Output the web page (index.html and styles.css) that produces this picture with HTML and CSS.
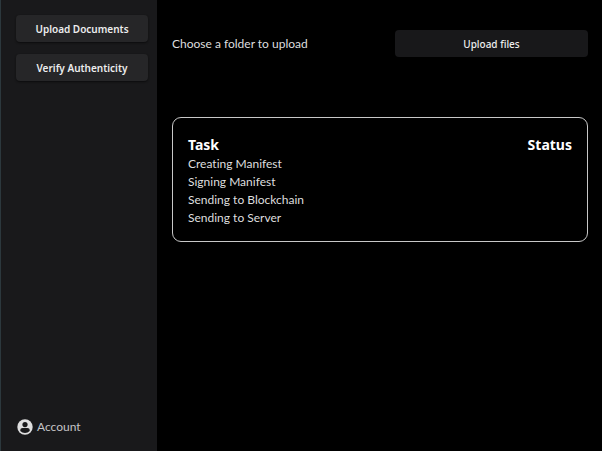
FILE: index.html
```html
<!DOCTYPE html>
<html lang="en">
<head>
<meta charset="utf-8">
<meta name="viewport" content="width=device-width, initial-scale=1">
<title>Upload Documents</title>
<link rel="stylesheet" href="styles.css">
</head>
<body>
<div class="app">
  <aside class="sidebar">
    <nav class="nav">
      <button class="button nav-button" type="button">Upload Documents</button>
      <button class="button nav-button" type="button">Verify Authenticity</button>
    </nav>
    <a class="account" href="#account">
      <svg class="account-icon" viewBox="0 0 16 16" aria-hidden="true">
        <circle cx="8" cy="8" r="7.7" fill="#dededf"/>
        <circle cx="8" cy="5.6" r="2.6" fill="#19191b"/>
        <path d="M3.300 11.900V11c0-1.300 1-2.100 2.300-2.100h4.800c1.300 0 2.300.8 2.300 2.100v.9C11.500 13.200 9.800 13.900 8 13.900S4.500 13.200 3.300 11.900z" fill="#19191b"/>
      </svg>
      <span>Account</span>
    </a>
  </aside>
  <main class="main">
    <div class="upload-row">
      <label for="upload">Choose a folder to upload</label>
      <button class="button upload-button" id="upload" type="button">Upload files</button>
    </div>
    <section class="card">
      <table class="tasks">
        <thead>
          <tr><th scope="col">Task</th><th class="status" scope="col">Status</th></tr>
        </thead>
        <tbody>
          <tr><td>Creating Manifest</td><td></td></tr>
          <tr><td>Signing Manifest</td><td></td></tr>
          <tr><td>Sending to Blockchain</td><td></td></tr>
          <tr><td>Sending to Server</td><td></td></tr>
        </tbody>
      </table>
    </section>
  </main>
</div>
</body>
</html>
```
FILE: styles.css
```css
* {
  box-sizing: border-box;
}

body {
  margin: 0;
  background: #000;
  color: #dededf;
  font: 12px/18px Lato, "Noto Sans", sans-serif;
  font-variant-ligatures: none;
}

.app {
  display: grid;
  grid-template-columns: 157px 1fr;
  min-height: 100vh;
}

.sidebar {
  display: flex;
  flex-direction: column;
  justify-content: space-between;
  padding: 15px 9px 15px 15px;
  border-left: 1px solid #2c383d;
  background: #19191b;
}

.nav {
  display: grid;
  gap: 12px;
}

.button {
  height: 27px;
  padding: 0 8px;
  border: 0;
  border-radius: 4px;
  color: #ededee;
  font-family: "Noto Sans", sans-serif;
  font-size: 10px;
  line-height: 18px;
}

.nav-button {
  background: #262628;
  box-shadow: 0 1px 2px #0c0c0d;
  font-weight: 600;
}

.account {
  display: flex;
  align-items: center;
  gap: 4px;
  padding-left: 1px;
  color: #c4c4c6;
  text-decoration: none;
}

.account-icon {
  width: 16px;
  height: 16px;
}

.main {
  display: flex;
  flex-direction: column;
  gap: 60px;
  padding: 30px 14px 30px 15px;
}

.upload-row {
  display: grid;
  grid-template-columns: 1fr 193px;
  align-items: center;
}

.upload-button {
  background: #18181a;
  font-weight: 500;
}

.card {
  padding: 17px 15px 14px;
  border: 1px solid #c8c8c8;
  border-radius: 9px;
}

.tasks {
  width: 100%;
  border-collapse: collapse;
}

.tasks th,
.tasks td {
  padding: 0;
  text-align: left;
}

.tasks th {
  color: #fff;
  font-family: "Noto Sans", sans-serif;
  font-size: 14px;
  line-height: 20px;
  font-weight: 700;
}

.tasks .status {
  text-align: right;
}
```
